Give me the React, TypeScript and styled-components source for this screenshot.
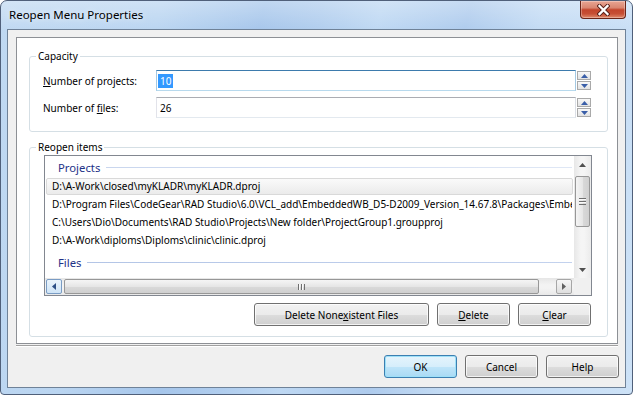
import React from 'react'
import styled, { createGlobalStyle } from 'styled-components'

const GlobalStyle = createGlobalStyle`
  html, body {
    margin: 0;
    padding: 0;
    background: #ffffff;
  }
  body {
    font-family: "Noto Sans", "Open Sans", sans-serif;
    font-size: 10px;
    color: #000;
  }
  * {
    box-sizing: border-box;
  }
`

const Window = styled.div`
  width: 633px;
  height: 395px;
  display: flex;
  flex-direction: column;
  border: 1px solid #50607a;
  border-radius: 7px 7px 4px 4px;
  overflow: hidden;
  background:
    linear-gradient(180deg, rgba(255, 255, 255, 0.3), rgba(255, 255, 255, 0) 30px),
    linear-gradient(105deg, #c0d9f2 0%, #bad5f1 22%, #a6c6eb 36%, #b0cdee 44%, #bed8f3 52%, #aecbed 64%, #c3dbf4 74%, #cde2f7 100%);
`

const TitleBar = styled.div`
  height: 28px;
  display: flex;
  align-items: flex-start;
  flex-shrink: 0;
`

const Caption = styled.span`
  padding-left: 8px;
  line-height: 28px;
  font-size: 11.5px;
  color: #000;
  text-shadow: 0 0 6px rgba(255, 255, 255, 0.8);
`

const CloseButton = styled.div`
  margin-left: auto;
  margin-right: 6px;
  width: 46px;
  height: 18px;
  border: 1px solid #6a2418;
  border-top: none;
  border-radius: 0 0 4px 4px;
  background: linear-gradient(#e9a593 0%, #d98671 40%, #c3452c 52%, #c64f35 75%, #e08a6c 100%);
  box-shadow: inset 0 0 0 1px rgba(255, 255, 255, 0.3);
  display: flex;
  align-items: center;
  justify-content: center;
`

const Client = styled.div`
  flex: 1;
  margin: 0 6px 6px;
  border: 1px solid #6f8298;
  background: #f0f0f0;
  display: flex;
  flex-direction: column;
`

const Panel = styled.div`
  margin: 7px 7px 0 8px;
  background: #ffffff;
  border: 1px solid #8d9095;
  padding-bottom: 6px;
`

const GroupBox = styled.fieldset<{ $top: number; $pb: number }>`
  margin: ${({ $top }) => $top}px 9px 0 12px;
  padding: 0 16px ${({ $pb }) => $pb}px 6px;
  border: 1px solid #d5dfe5;
  border-radius: 3px;
  min-width: 0;
`

const Legend = styled.legend`
  padding: 0 2px;
  line-height: 14px;
  font-size: 10px;
`

const Fields = styled.div`
  padding-top: 7px;
  display: flex;
  flex-direction: column;
  gap: 6px;
`

const FieldRow = styled.div`
  display: flex;
  align-items: center;
  height: 21px;
  margin-left: 7px;
`

const FieldLabel = styled.label`
  width: 113px;
  flex-shrink: 0;
`

const TextBox = styled.div<{ $focused?: boolean }>`
  flex: 1;
  height: 21px;
  border: 1px solid;
  border-color: ${({ $focused }) =>
    $focused ? '#3d7bad #a4c9e3 #b7d9ed #a4c9e3' : '#abadb3 #dbdfe6 #e3e9ef #e2e3ea'};
  display: flex;
  align-items: center;
  padding-left: 3px;
  background: #fff;
`

const Selection = styled.span`
  margin-left: -2px;
  padding: 0 2px;
  line-height: 14px;
  background: #3399ff;
  color: #fff;
`

const Spin = styled.div`
  width: 14px;
  height: 21px;
  margin-left: 1px;
  padding-top: 1px;
  display: flex;
  flex-direction: column;
  gap: 1px;
  flex-shrink: 0;
`

const SpinButton = styled.div`
  height: 9px;
  border: 1px solid #a9a9a9;
  background: linear-gradient(#f8f8f8, #e3e3e3);
  display: flex;
  align-items: center;
  justify-content: center;
`

const ListBox = styled.div`
  margin: 1px -1px 0 8px;
  height: 141px;
  border: 1px solid #828790;
  display: grid;
  grid-template-columns: 1fr 17px;
  grid-template-rows: 1fr 17px;
  background: #fff;
`

const Items = styled.div`
  overflow: hidden;
  min-width: 0;
`

const GroupHeader = styled.div<{ $gap: number; $line: string }>`
  display: flex;
  align-items: center;
  height: 22px;
  margin-top: ${({ $gap }) => $gap}px;
  padding: 0 2px 0 13px;
  color: #1e3287;
  font-size: 11.3px;

  &::after {
    content: '';
    flex: 1;
    height: 1px;
    margin-left: 6px;
    background: ${({ $line }) => $line};
  }
`

const Row = styled.div<{ $selected?: boolean }>`
  height: 17px;
  margin: 0 1px 1px;
  padding-left: 5px;
  border: 1px solid ${({ $selected }) => ($selected ? '#d9d9d9' : 'transparent')};
  border-radius: 2px;
  background: ${({ $selected }) => ($selected ? 'linear-gradient(#fafafa, #ebebeb)' : 'transparent')};
  line-height: 15px;
  white-space: nowrap;
  overflow: hidden;
`

const HScroll = styled.div`
  display: flex;
  align-items: center;
  background: linear-gradient(#e6e6e6, #f3f3f3 40%, #f3f3f3 60%, #e9e9e9);
`

const ArrowBox = styled.div<{ $hot?: boolean }>`
  width: 16px;
  height: 15px;
  flex-shrink: 0;
  border: 1px solid ${({ $hot }) => ($hot ? '#7a9cc4' : '#a6a6a6')};
  border-radius: 2px;
  background: ${({ $hot }) =>
    $hot ? 'linear-gradient(#eaf4fc, #cfe4f6)' : 'linear-gradient(#f6f6f6, #dedede)'};
  display: flex;
  align-items: center;
  justify-content: center;
`

const HThumb = styled.div`
  width: 475px;
  height: 15px;
  margin-left: 2px;
  border: 1px solid #979797;
  border-radius: 2px;
  background: linear-gradient(#f5f5f5, #e6e6e6 50%, #d9d9d9 51%, #d0d0d0);
  display: flex;
  align-items: center;
  justify-content: center;
`

const Spacer = styled.div`
  flex: 1;
`

const Grip = styled.div<{ $vertical?: boolean }>`
  width: ${({ $vertical }) => ($vertical ? '7px' : '7px')};
  height: ${({ $vertical }) => ($vertical ? '7px' : '6px')};
  background: ${({ $vertical }) =>
    $vertical
      ? 'repeating-linear-gradient(to bottom, #6f6f6f 0 1px, #fafafa 1px 2px, transparent 2px 3px)'
      : 'repeating-linear-gradient(to right, #6f6f6f 0 1px, #fafafa 1px 2px, transparent 2px 3px)'};
`

const VScroll = styled.div`
  display: flex;
  flex-direction: column;
  align-items: center;
  background: linear-gradient(to right, #e7e7e7, #f5f5f5 40%, #f5f5f5 60%, #ebebeb);
`

const GlyphCell = styled.div`
  height: 17px;
  width: 17px;
  display: flex;
  align-items: center;
  justify-content: center;
  flex-shrink: 0;
`

const VThumb = styled.div`
  width: 15px;
  height: 51px;
  margin-top: 3px;
  border: 1px solid #979797;
  border-radius: 2px;
  background: linear-gradient(to right, #f5f5f5, #e6e6e6 50%, #d9d9d9 51%, #d0d0d0);
  display: flex;
  align-items: center;
  justify-content: center;
`

const Corner = styled.div`
  background: #f0f0f0;
`

const ButtonRow = styled.div<{ $top: number; $right: number }>`
  display: flex;
  justify-content: flex-end;
  gap: 8px;
  margin-top: ${({ $top }) => $top}px;
  padding-right: ${({ $right }) => $right}px;
`

const Button = styled.button<{ $width: number; $default?: boolean }>`
  width: ${({ $width }) => $width}px;
  height: 23px;
  padding: 0;
  border: 1px solid ${({ $default }) => ($default ? '#3c7fb1' : '#707070')};
  border-radius: 3px;
  background: ${({ $default }) =>
    $default
      ? 'linear-gradient(#e5f4fc 0%, #d6eefb 50%, #bfe5f9 51%, #a9daf4 100%)'
      : 'linear-gradient(#f2f2f2 0%, #ebebeb 50%, #dddddd 51%, #cfcfcf 100%)'};
  box-shadow: ${({ $default }) =>
    $default ? 'inset 0 0 0 1px #9ee0f8' : 'inset 0 0 0 1px rgba(255, 255, 255, 0.75)'};
  font-family: "Noto Sans", "Open Sans", sans-serif;
  font-size: 10px;
  color: #000;
`

const Separator = styled.div`
  margin: 1px 7px 0 8px;
  height: 2px;
  border-top: 1px solid #a0a0a0;
  border-bottom: 1px solid #ffffff;
`

type Dir = 'up' | 'down' | 'left' | 'right'

const Triangle = ({ dir, color, size = 7 }: { dir: Dir; color: string; size?: number }) => {
  const h = Math.ceil(size / 2) + 0
  const pts: Record<Dir, string> = {
    up: `0,${h} ${size / 2},0 ${size},${h}`,
    down: `0,0 ${size / 2},${h} ${size},0`,
    left: `${h},0 0,${size / 2} ${h},${size}`,
    right: `0,0 ${h},${size / 2} 0,${size}`,
  }
  const vertical = dir === 'up' || dir === 'down'
  return (
    <svg width={vertical ? size : h} height={vertical ? h : size} style={{ display: 'block' }}>
      <polygon points={pts[dir]} fill={color} />
    </svg>
  )
}

const CloseGlyph = () => (
  <svg width="13" height="12" viewBox="0 0 13 12" style={{ display: 'block' }}>
    <path d="M2.5 2 L10.5 10 M10.5 2 L2.5 10" stroke="#57201a" strokeWidth="4.2" strokeLinecap="square" />
    <path d="M2.5 2 L10.5 10 M10.5 2 L2.5 10" stroke="#ffffff" strokeWidth="2.3" strokeLinecap="square" />
  </svg>
)

const projects = [
  'D:\\A-Work\\closed\\myKLADR\\myKLADR.dproj',
  'D:\\Program Files\\CodeGear\\RAD Studio\\6.0\\VCL_add\\EmbeddedWB_D5-D2009_Version_14.67.8\\Packages\\EmbeddedWB_D2009.groupproj',
  'C:\\Users\\Dio\\Documents\\RAD Studio\\Projects\\New folder\\ProjectGroup1.groupproj',
  'D:\\A-Work\\diploms\\Diploms\\clinic\\clinic.dproj',
]

const SpinBox = () => (
  <Spin>
    <SpinButton>
      <Triangle dir="up" color="#3a5ea8" size={7} />
    </SpinButton>
    <SpinButton>
      <Triangle dir="down" color="#3a5ea8" size={7} />
    </SpinButton>
  </Spin>
)

export default function App() {
  return (
    <>
      <GlobalStyle />
      <Window>
        <TitleBar>
          <Caption>Reopen Menu Properties</Caption>
          <CloseButton>
            <CloseGlyph />
          </CloseButton>
        </TitleBar>
        <Client>
          <Panel>
            <GroupBox $top={11} $pb={13}>
              <Legend>Capacity</Legend>
              <Fields>
                <FieldRow>
                  <FieldLabel>
                    <u>N</u>umber of projects:
                  </FieldLabel>
                  <TextBox $focused>
                    <Selection>10</Selection>
                  </TextBox>
                  <SpinBox />
                </FieldRow>
                <FieldRow>
                  <FieldLabel>
                    Number of <u>f</u>iles:
                  </FieldLabel>
                  <TextBox>26</TextBox>
                  <SpinBox />
                </FieldRow>
              </Fields>
            </GroupBox>
            <GroupBox $top={8} $pb={10}>
              <Legend>Reopen items</Legend>
              <ListBox>
                <Items>
                  <GroupHeader $gap={0} $line="linear-gradient(to right, #c9d6ee, #dfe7f5)">
                    Projects
                  </GroupHeader>
                  {projects.map((p, i) => (
                    <Row key={p} $selected={i === 0}>
                      {p}
                    </Row>
                  ))}
                  <GroupHeader $gap={2} $line="linear-gradient(to right, #b3c5e6, #c3d2ee)">
                    Files
                  </GroupHeader>
                </Items>
                <VScroll>
                  <GlyphCell>
                    <Triangle dir="up" color="#505050" />
                  </GlyphCell>
                  <VThumb>
                    <Grip $vertical />
                  </VThumb>
                  <Spacer />
                  <GlyphCell>
                    <Triangle dir="down" color="#505050" />
                  </GlyphCell>
                </VScroll>
                <HScroll>
                  <ArrowBox $hot style={{ marginLeft: 1 }}>
                    <Triangle dir="left" color="#2c4f86" />
                  </ArrowBox>
                  <HThumb>
                    <Grip />
                  </HThumb>
                  <Spacer />
                  <ArrowBox style={{ marginRight: 2 }}>
                    <Triangle dir="right" color="#606060" />
                  </ArrowBox>
                </HScroll>
                <Corner />
              </ListBox>
              <ButtonRow $top={7} $right={0}>
                <Button $width={175}>
                  Delete None<u>x</u>istent Files
                </Button>
                <Button $width={73}>
                  <u>D</u>elete
                </Button>
                <Button $width={73}>
                  <u>C</u>lear
                </Button>
              </ButtonRow>
            </GroupBox>
          </Panel>
          <Separator />
          <ButtonRow $top={8} $right={6}>
            <Button $width={73} $default>
              OK
            </Button>
            <Button $width={73}>Cancel</Button>
            <Button $width={73}>Help</Button>
          </ButtonRow>
        </Client>
      </Window>
    </>
  )
}
